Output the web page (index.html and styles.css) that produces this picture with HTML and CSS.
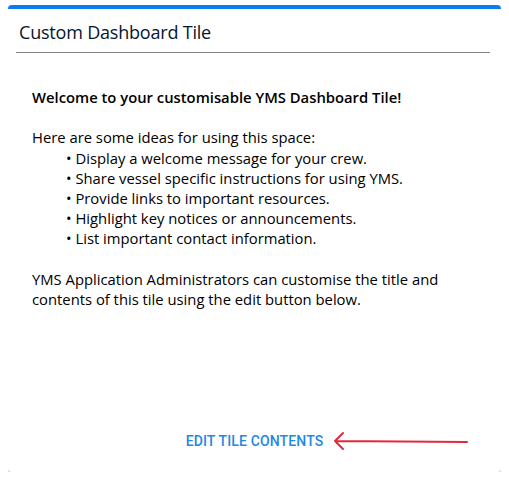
FILE: index.html
```html
<!DOCTYPE html>
<html lang="en">
<head>
  <meta charset="UTF-8">
  <meta name="viewport" content="width=device-width, initial-scale=1.0">
  <title>Custom Dashboard Tile</title>
  <link rel="stylesheet" href="styles.css">
</head>
<body>
  <div class="tile">
    <div class="tile-header">
      <h2>Custom Dashboard Tile</h2>
    </div>
    <div class="tile-content">
      <p><strong>Welcome to your customisable YMS Dashboard Tile!</strong></p>
      <p class="lead">Here are some ideas for using this space:</p>
      <ul class="ideas">
        <li>Display a welcome message for your crew.</li>
        <li>Share vessel specific instructions for using YMS.</li>
        <li>Provide links to important resources.</li>
        <li>Highlight key notices or announcements.</li>
        <li>List important contact information.</li>
      </ul>
      <p>YMS Application Administrators can customise the title and contents of this tile using the edit button below.</p>
    </div>
    <div class="tile-actions">
      <button class="edit-button" type="button">Edit tile contents</button>
      <svg class="pointer" width="140" height="24" viewBox="0 0 140 24">
        <path d="M2 12 L134 13 M2 12 L10 4 M2 12 L10 20" fill="none" stroke="#e2283e" stroke-width="2" stroke-linecap="round" stroke-linejoin="round"/>
      </svg>
    </div>
  </div>
</body>
</html>
```

FILE: styles.css
```css
body {
  margin: 5px 8px 0;
  font-family: 'Open Sans', 'Noto Sans', sans-serif;
  background: #fff;
  color: #000;
}
.tile {
  display: flex;
  flex-direction: column;
  height: 467px;
  background: #fff;
  border-top: 4px solid #0a7cf0;
  border-radius: 4px;
  box-shadow: 0 2px 4px rgba(0, 0, 0, 0.25), 0 1px 10px rgba(0, 0, 0, 0.1);
  box-sizing: border-box;
}
.tile-header {
  margin: 0 11px 0 8px;
  padding: 11px 0 8px 3px;
  border-bottom: 1px solid #858585;
}
.tile-header h2 {
  margin: 0;
  font-size: 18px;
  font-weight: 500;
  letter-spacing: -0.2px;
  line-height: 24px;
  color: #04162f;
}
.tile-content {
  flex: 1;
  padding: 34px 24px 0;
  font-size: 14.8px;
  line-height: 20.2px;
}
.tile-content p {
  margin: 0 0 20.2px;
}
.tile-content p.lead {
  margin: 0;
}
.tile-content strong {
  font-weight: 600;
}
.ideas {
  list-style: none;
  margin: 0 0 20.2px;
  padding: 0 0 0 34px;
}
.ideas li::before {
  content: "\2022\00a0";
}
.tile-actions {
  position: relative;
  display: flex;
  justify-content: center;
  padding-bottom: 13px;
}
.edit-button {
  height: 36px;
  padding: 0 8px;
  background: none;
  border: none;
  font-family: Roboto, sans-serif;
  font-size: 14px;
  font-weight: 500;
  letter-spacing: 0.01em;
  text-transform: uppercase;
  color: #1e88e5;
  cursor: pointer;
}
.pointer {
  position: absolute;
  left: 325px;
  top: 6px;
}
```
